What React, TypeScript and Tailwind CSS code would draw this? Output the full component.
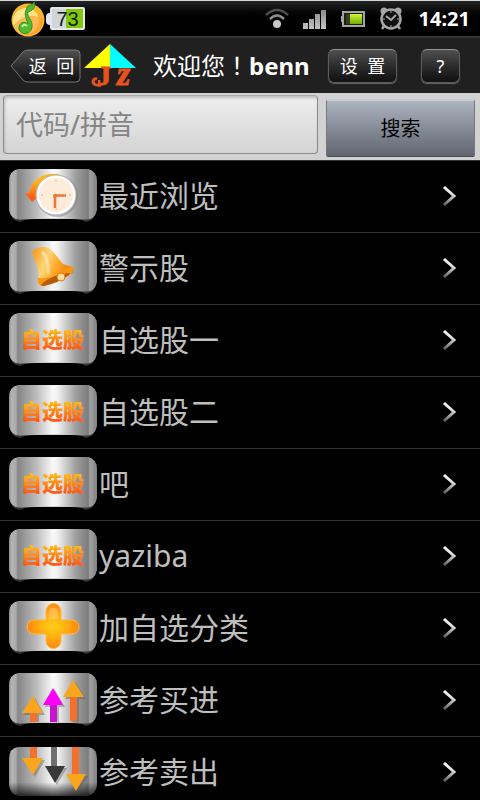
import type { ReactNode } from 'react'

const FONT = "font-['Noto_Sans','Noto_Sans_CJK_SC',sans-serif]"

const items = [
  { label: '最近浏览', icon: 'recent' },
  { label: '警示股', icon: 'alert' },
  { label: '自选股一', icon: 'custom' },
  { label: '自选股二', icon: 'custom' },
  { label: '吧', icon: 'custom' },
  { label: 'yaziba', icon: 'custom' },
  { label: '加自选分类', icon: 'add' },
  { label: '参考买进', icon: 'buy' },
  { label: '参考卖出', icon: 'sell' },
]

// Shared gradients, referenced by id from the other icons
function Gradients() {
  return (
    <svg className="absolute h-0 w-0" aria-hidden="true">
      <defs>
        <linearGradient id="metal" x1="0" x2="1" y1="0" y2="0">
          <stop offset="0" stopColor="#8e8e8e" />
          <stop offset="0.03" stopColor="#b4b4b4" />
          <stop offset="0.08" stopColor="#aaaaaa" />
          <stop offset="0.1" stopColor="#868686" />
          <stop offset="0.3" stopColor="#b8b8b8" />
          <stop offset="0.5" stopColor="#fafafa" />
          <stop offset="0.56" stopColor="#eeeeee" />
          <stop offset="0.76" stopColor="#9e9e9e" />
          <stop offset="0.9" stopColor="#7c7c7c" />
          <stop offset="0.92" stopColor="#a2a2a2" />
          <stop offset="1" stopColor="#808080" />
        </linearGradient>
        <linearGradient id="metalShade" x1="0" x2="0" y1="0" y2="1">
          <stop offset="0.72" stopColor="#000" stopOpacity="0" />
          <stop offset="1" stopColor="#000" stopOpacity="0.75" />
        </linearGradient>
        <linearGradient id="foot" x1="0" x2="0" y1="0" y2="1">
          <stop offset="0.5" stopColor="#777777" />
          <stop offset="1" stopColor="#222222" />
        </linearGradient>
        <linearGradient id="fire" x1="0" x2="0" y1="0" y2="1">
          <stop offset="0.25" stopColor="#ffb81a" />
          <stop offset="0.85" stopColor="#ff5a14" />
        </linearGradient>
        <linearGradient id="bell" x1="0" x2="1" y1="0" y2="0.4">
          <stop offset="0" stopColor="#f5930f" />
          <stop offset="0.4" stopColor="#ffd57a" />
          <stop offset="0.65" stopColor="#ffab2b" />
          <stop offset="1" stopColor="#ea7a08" />
        </linearGradient>
        <radialGradient id="plus">
          <stop offset="0" stopColor="#ffcf1a" />
          <stop offset="0.5" stopColor="#ffb010" />
          <stop offset="1" stopColor="#ff8412" />
        </radialGradient>
        <linearGradient id="chevron" x1="0" x2="0" y1="0" y2="1">
          <stop offset="0" stopColor="#ffffff" />
          <stop offset="0.5" stopColor="#d0d0d0" />
          <stop offset="1" stopColor="#5e5e5e" />
        </linearGradient>
        <linearGradient id="signal" x1="0" x2="0" y1="0" y2="1">
          <stop offset="0" stopColor="#8a8a8a" />
          <stop offset="1" stopColor="#c4c4c4" />
        </linearGradient>
        <linearGradient id="green" x1="0" x2="0" y1="0" y2="1">
          <stop offset="0" stopColor="#d3f536" />
          <stop offset="1" stopColor="#6fae06" />
        </linearGradient>
      </defs>
    </svg>
  )
}

function RecentIcon() {
  return (
    <>
      <path d="M50 5C34 3 23 10 20 24L16 24L23 33L30 27L27 26C29 17 37 11 47 11Z" fill="url(#fire)" />
      <circle cx="48" cy="27" r="21" fill="#777" opacity="0.45" />
      <circle cx="47" cy="26" r="20" fill="#fffdfa" stroke="#b5b5b5" strokeWidth="1" />
      <circle cx="47" cy="26" r="17" fill="#fdecd9" />
      <path d="M46 39V27M45 26.5H57" fill="none" stroke="#f07432" strokeWidth="2.5" />
      <circle cx="46" cy="27" r="2" fill="#f07432" />
      <path d="M47 11v2M47 39v2M32 26h2M60 26h2" stroke="#f5ab80" strokeWidth="1" />
    </>
  )
}

function BellIcon() {
  return (
    <>
      <path d="M26 8C34 4 41 6 46 13L54 23L60 25C66 26 66 31 62 33L35 45C31 46 29 43 29 38L30 33L27 22C25 16 21 12 26 8Z" fill="url(#bell)" />
      <path d="M29 37C39 38 53 33 61 25C66 27 65 31 60 34L35 45C31 46 28 42 29 37Z" fill="#f6980f" />
      <path d="M32 44C38 37 49 33 61 32C59 37 43 44 34 45Z" fill="#b95a0a" />
      <circle cx="52" cy="36" r="4" fill="#ffdf9b" stroke="#dd7c0f" strokeWidth="1" />
      <path d="M33 11C37 14 40 24 39 33" fill="none" stroke="#ffe9b4" strokeWidth="3" opacity="0.7" />
    </>
  )
}

function CustomIcon() {
  return (
    <text
      x="12"
      y="34"
      fontSize="21"
      fontWeight="900"
      fontFamily="Noto Sans CJK SC, sans-serif"
      fill="url(#fire)"
    >
      自选股
    </text>
  )
}

function PlusIcon() {
  return (
    <>
      <path
        d="M37 10a7.500 7.500 0 0 1 15 0v9h11a7 7 0 0 1 0 14H52v7a7.500 7.500 0 0 1-15 0v-7H25a7 7 0 0 1 0-14h12Z"
        fill="url(#plus)"
        stroke="#ffb93c"
        strokeWidth="1"
      />
      <path d="M40 11a4.500 4.500 0 0 1 9 0v7H40Z" fill="#fff" opacity="0.25" />
    </>
  )
}

function BuyIcon() {
  return (
    <>
      <path d="M15 42L26 25L36 42H30V49H23V42ZM36 34L46 17L56 34H50V49H43V34ZM56 26L66 9L77 26H70V49H63V26Z" fill="#555" opacity="0.4" />
      <path d="M21 38h7v11h-7Z" fill="#f4702c" />
      <path d="M24 23L34 40H13Z" fill="#fba51c" />
      <path d="M41 30h7v19h-7Z" fill="#c813cf" />
      <path d="M44 15L54 32H34Z" fill="#fb00fb" />
      <path d="M61 22h7v26h-7Z" fill="#f4702c" />
      <path d="M64 7L75 24H54Z" fill="#fba51c" />
    </>
  )
}

function SellIcon() {
  return (
    <>
      <path d="M15 15H36L26 32ZM38 23H58L48 40ZM59 31H79L69 48Z" fill="#555" opacity="0.4" />
      <path d="M21 2h7v13h-7Z" fill="#f4702c" />
      <path d="M13 13H34L24 30Z" fill="#fba51c" />
      <path d="M42 2h6v21h-6Z" fill="#707070" />
      <path d="M36 21H56L46 38Z" fill="#393939" />
      <path d="M63 2h7v29h-7Z" fill="#f4702c" />
      <path d="M57 29H77L67 46Z" fill="#fba51c" />
    </>
  )
}

const icons: Record<string, ReactNode> = {
  recent: <RecentIcon />,
  alert: <BellIcon />,
  custom: <CustomIcon />,
  add: <PlusIcon />,
  buy: <BuyIcon />,
  sell: <SellIcon />,
}

function MetalTile({ icon }: { icon: string }) {
  const plate =
    icon === 'sell'
      ? 'M9 2H79Q88 3 88 14V40Q87 50 76 51H12Q1 50 0 40V14Q0 3 9 2Z'
      : 'M9 0H79Q88 2 88 12V41Q86 50 78 50.500Q44 49 10 50.500Q2 50 0 41V12Q0 2 9 0Z'
  return (
    <svg className="h-[54px] w-[88px] shrink-0" viewBox="0 0 88 54" aria-hidden="true">
      {icon !== 'sell' && (
        <path d="M0 38Q2 53 12 53Q14 51 20 50H68Q74 51 76 53Q86 53 88 38Z" fill="url(#foot)" />
      )}
      <path d={plate} fill="url(#metal)" />
      {icon === 'sell' && <path d={plate} fill="url(#metalShade)" />}
      {icons[icon]}
    </svg>
  )
}

function StatusBar() {
  return (
    <div className="flex h-9 items-center border-t border-gray-300 bg-linear-to-b from-[#252525] to-black to-60% px-[10px]">
      <svg className="h-9 w-9" viewBox="0 0 36 36" aria-hidden="true">
        <circle cx="18" cy="19" r="16.500" fill="#f9b52b" />
        <circle cx="16" cy="20" r="13" fill="#ffe58a" />
        <path d="M3 25Q16 9 34 18Q33 29 23 34Q10 35 3 25Z" fill="#fb9b2e" opacity="0.6" />
        <path d="M17 7C17 3 24 5 24 1C27 7 21 10 18 11C16 15 23 19 22 26C21 35 9 34 9 27C9 21 15 20 18 23C17 18 13 14 17 7Z" fill="#55b92f" stroke="#2b9323" strokeWidth="1" />
        <path d="M12 26Q14 22 17 25" fill="none" stroke="#c5f39c" strokeWidth="2" />
      </svg>
      {/* battery level */}
      <div className="flex items-center">
        <span className="h-3 w-1 rounded-l-sm bg-gray-200" />
        <span className="flex h-[23px] w-[35px] items-center justify-center rounded-xs border-2 border-gray-200 bg-linear-to-r from-gray-300 from-45% to-[#83c808] to-45% font-['Liberation_Sans',sans-serif] text-xl leading-none text-[#102008]">
          73
        </span>
      </div>
      <div className="ml-auto flex items-center">
        <svg className="h-6 w-6" viewBox="0 0 24 24" fill="none" aria-hidden="true">
          <path d="M1 8Q12-2 23 8" stroke="#4e4e4e" strokeWidth="2.5" />
          <path d="M5 12Q12 5 19 12" stroke="#8e8e8e" strokeWidth="2.5" />
          <circle cx="12" cy="17" r="4" fill="#c8c8c8" />
        </svg>
        <svg className="ml-[14px] h-5 w-6" viewBox="0 0 24 20" fill="url(#signal)" aria-hidden="true">
          <path d="M0 14h5v6H0ZM6 10h5v10H6ZM12 5h5v15h-5ZM18 1h5v19h-5Z" />
        </svg>
        <svg className="ml-[14px] h-4 w-6" viewBox="0 0 24 16" aria-hidden="true">
          <rect x="2" y="1" width="21" height="14" fill="#1c2010" stroke="#a5a5a5" strokeWidth="2" />
          <path d="M0 5h2v6H0Z" fill="#a5a5a5" />
          <path d="M5 3h4v10H5Z" fill="#34401a" />
          <path d="M9 3h12v10H9Z" fill="url(#green)" />
        </svg>
        <svg className="ml-[14px] h-6 w-6" viewBox="0 0 24 24" fill="none" stroke="#a6a6a6" aria-hidden="true">
          <circle cx="5" cy="4" r="3.5" fill="#a6a6a6" stroke="none" />
          <circle cx="19" cy="4" r="3.5" fill="#a6a6a6" stroke="none" />
          <circle cx="12" cy="12" r="9.5" fill="#111" strokeWidth="2.5" />
          <path d="M7 9L12 13L17 8" strokeWidth="2" />
          <path d="M12 4v2M12 18v2M4 12h2M18 12h2" strokeWidth="1" />
          <path d="M5 19L3 22M19 19L21 22" strokeWidth="2.5" />
        </svg>
        <span className="ml-4 text-xl leading-6 font-bold text-white">14:21</span>
      </div>
    </div>
  )
}

function Logo() {
  return (
    <svg className="ml-[2px] h-[46px] w-[54px] overflow-visible" viewBox="0 0 54 46" aria-label="JZ">
      <path d="M27 1V25H1Z" fill="#ffff00" />
      <path d="M27 1V25H53Z" fill="#00ffff" />
      <g fill="#e8521c" stroke="#e8521c" fontFamily="Liberation Serif, serif" fontWeight="700">
        <text x="14" y="42" fontSize="28">J</text>
        <text x="34" y="42" fontSize="34" fontStyle="italic">z</text>
      </g>
      <path d="M18 42Q10 43 10 38Q11 35 14 36" fill="none" stroke="#e8521c" strokeWidth="3" />
    </svg>
  )
}

function Header() {
  const button =
    'h-[34px] rounded-md border border-[#5c5c5c] border-t-[#969696] bg-linear-to-b from-[#505050] via-[#2c2c2c] to-[#111111] text-lg leading-none text-white shadow-[0_1px_1px_#666]'
  return (
    <header className="flex h-[57px] items-center border-t-2 border-[#333] bg-[#202020] pr-5 pl-[10px]">
      <button className="relative h-[34px] w-[71px] pl-3 text-lg leading-none text-white">
        <svg className="absolute inset-0 h-full w-full" viewBox="0 0 71 34" aria-hidden="true">
          <defs>
            <linearGradient id="back" x1="0" x2="0" y1="0" y2="1">
              <stop offset="0" stopColor="#505050" />
              <stop offset="0.5" stopColor="#2c2c2c" />
              <stop offset="1" stopColor="#111" />
            </linearGradient>
          </defs>
          <path d="M1 17L13 3Q15 1 18 1H66Q70 1 70 5V29Q70 33 66 33H18Q15 33 13 31Z" fill="url(#back)" stroke="#777" />
        </svg>
        <span className="relative">返&nbsp; 回</span>
      </button>
      <Logo />
      <h1 className="ml-4 text-2xl leading-8 whitespace-nowrap text-white">
        欢迎您
        <span className="font-['Noto_Sans_CJK_TC',sans-serif]" lang="zh-Hant">
          ！
        </span>
        <span className="font-bold">benn</span>
      </h1>
      <button className={`${button} ml-auto w-[69px]`}>设&nbsp; 置</button>
      <button className={`${button} ml-6 w-[39px]`}>?</button>
    </header>
  )
}

function SearchBar() {
  return (
    <form className="flex h-[67px] items-start gap-2 bg-[#d2d2d2] pt-[2px] pr-[5px] pl-[3px]" onSubmit={(e) => e.preventDefault()}>
      <input
        type="text"
        aria-label="代码/拼音"
        placeholder="代码/拼音"
        className="h-[59px] min-w-0 flex-1 rounded-sm border border-[#8a8a8a] border-t-[#aaa] bg-linear-to-b from-[#eeeeee] to-[#d4d4d4] px-3 text-[27px] text-black shadow-[inset_1px_2px_3px_#bbb] placeholder:text-[#858585]"
      />
      <button className="mt-1 h-[58px] w-[149px] rounded-xs border border-[#777] border-t-2 border-t-[#c5ccd4] border-b-[#484c52] bg-linear-to-b from-[#adb5bf] via-[#858c97] to-[#616570] text-xl text-black">
        搜索
      </button>
    </form>
  )
}

export default function App() {
  return (
    <div className={`${FONT} h-screen overflow-hidden bg-black`}>
      <Gradients />
      <StatusBar />
      <Header />
      <SearchBar />
      <ul>
        {items.map((item) => (
          <li key={item.label} className="h-[72px] border-t border-[#333]">
            <a href="#" className="flex h-full items-center pr-[22px] pb-[2px] pl-[9px]">
              <MetalTile icon={item.icon} />
              <span className="ml-[2px] text-3xl text-[#bebebe]">{item.label}</span>
              <svg className="ml-auto h-6 w-4" viewBox="0 0 16 24" fill="none" aria-hidden="true">
                <path d="M2 3L12 12L2 21" stroke="url(#chevron)" strokeWidth="3" />
              </svg>
            </a>
          </li>
        ))}
      </ul>
    </div>
  )
}
